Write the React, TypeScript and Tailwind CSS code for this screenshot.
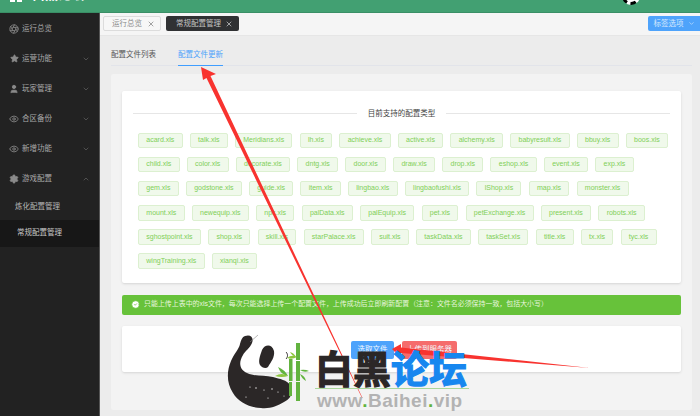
import { ChevronDown, ChevronUp, Aperture, Star, User, Eye, Settings, X, CircleCheck } from "lucide-react";

const menu = [
  { label: "运行总览", icon: <Aperture size={10} />, arrow: false },
  { label: "运营功能", icon: <Star size={9} fill="currentColor" />, arrow: true },
  { label: "玩家管理", icon: <User size={10} fill="currentColor" />, arrow: true },
  { label: "合区备份", icon: <Eye size={10} />, arrow: true },
  { label: "新增功能", icon: <Eye size={10} />, arrow: true },
];

const rows = [
  ["acard", "talk", "Meridians", "lh", "achieve", "active", "alchemy", "babyresult", "bbuy", "boos"],
  ["child", "color", "decorate", "dntg", "door", "draw", "drop", "eshop", "event", "exp"],
  ["gem", "godstone", "guide", "item", "lingbao", "lingbaofushi", "lShop", "map", "monster"],
  ["mount", "newequip", "npc", "palData", "palEquip", "pet", "petExchange", "present", "robots"],
  ["sghostpoint", "shop", "skill", "starPalace", "suit", "taskData", "taskSet", "title", "tx", "tyc"],
  ["wingTraining", "xianqi"],
];

function Sidebar() {
  return (
    <aside className="w-[100px] shrink-0 bg-[#222222] border-r border-[#555] text-[#a9a9a9] text-[7.5px] pt-[1px]">
      {menu.map((m) => (
        <div key={m.label} className="h-[30px] flex items-center pl-[6px] pr-[9px]">
          <span className="w-[16px] flex justify-center text-[#8a8a8a]">{m.icon}</span>
          <span className="flex-1">{m.label}</span>
          {m.arrow && <ChevronDown size={8} className="text-[#666]" />}
        </div>
      ))}
      <div className="h-[30px] flex items-center pl-[6px] pr-[9px]">
        <span className="w-[16px] flex justify-center text-[#8a8a8a]">
          <Settings size={10} fill="currentColor" />
        </span>
        <span className="flex-1">游戏配置</span>
        <ChevronUp size={8} className="text-[#666]" />
      </div>
      <div className="h-[26px] flex items-center pl-[15px] text-[#b5b5b5]">炼化配置管理</div>
      <div className="h-[27px] flex items-center pl-[17px] bg-[#171717] text-[#c8c8c8]">常规配置管理</div>
    </aside>
  );
}

function TabStrip() {
  return (
    <div className="h-[23px] shrink-0 bg-[#f5f5f5] border-b border-[#e6e6e6] flex items-center pl-[3px] text-[7.5px]">
      <div className="h-[15px] w-[58px] bg-[#f7f7f7] border border-[#dcdcdc] rounded-[2px] flex items-center pl-[8px] text-[#8c8c8c]">
        <span className="flex-1">运行总览</span>
        <X size={8} className="mr-[5px] text-[#777]" />
      </div>
      <div className="h-[15px] w-[73px] ml-[5px] bg-[#303133] rounded-[2px] flex items-center pl-[10px] text-[#c4c4c4]">
        <span className="flex-1">常规配置管理</span>
        <X size={8} className="mr-[6px] text-[#ddd]" />
      </div>
      <div className="ml-auto h-[15px] w-[52px] bg-[#4ea3fb] rounded-l-[2px] flex items-center justify-center gap-[4px] text-[#d5e8fd]">
        标签选项
        <ChevronDown size={7} />
      </div>
    </div>
  );
}

function Tags() {
  return (
    <div className="flex flex-col gap-[8.6px] mt-[14px] ml-[5px]">
      {rows.map((row, i) => (
        <div key={i} className="flex gap-[7.2px]">
          {row.map((t) => (
            <span
              key={t}
              className="h-[15.5px] px-[7.3px] flex items-center bg-[#f0f9eb] border border-[#dcf0d0] rounded-[2px] text-[#7fcf57] text-[7px] whitespace-nowrap"
            >
              {t}.xls
            </span>
          ))}
        </div>
      ))}
    </div>
  );
}

function Overlay() {
  return (
    <>
      <svg className="absolute left-0 top-0 w-[700px] h-[416px] pointer-events-none" viewBox="0 0 700 416">
        {/* long arrow up to the tab */}
        <path d="M201 67 L216 74 L210.5 76 L362.5 398 L362 398 L206.5 78 L203 80 Z" fill="#f8332f" />
        {/* arrow to the select button */}
        <path d="M392 349 L401 344 L401 347.5 L590 368 L401 353 L400 357 Z" fill="#f8332f" />
        {/* panda ink */}
        <path
          d="M245 336 C251 334 254 338 252 343 C250 348 245 351 243 355 C238 363 240 370 247 373 C256 377 264 375 273 377 C280 379 287 380 290 385 C294 392 291 399 284 402 C277 406 270 409 261 408 C250 408 238 402 233 393 C226 383 227 370 231 361 C234 354 239 349 240 344 C241 340 242 337 245 336 Z"
          fill="#2b2727"
        />
        <path d="M262 350 C265 344 272 344 274 351 C275 357 271 362 268 367 C266 369 262 368 260 365 C258 361 260 356 262 350 Z" fill="#2b2727" />
        <path d="M250 342 L258 335" stroke="#888" strokeWidth="0.6" />
        <path d="M286 352 C288 354 288 357 286 359" stroke="#2b2727" strokeWidth="1" fill="none" />
        <g fill="#ffffff">
          <circle cx="250" cy="387" r="0.6" />
          <circle cx="256" cy="388" r="0.7" />
          <circle cx="264" cy="390" r="0.6" />
          <circle cx="272" cy="389" r="0.7" />
          <circle cx="278" cy="392" r="0.6" />
          <circle cx="246" cy="397" r="0.6" />
          <circle cx="268" cy="398" r="0.6" />
          <circle cx="284" cy="396" r="0.5" />
        </g>
        {/* bamboo */}
        <rect x="296" y="343" width="4" height="17" fill="#62b33f" />
        <rect x="296" y="361" width="4" height="20" fill="#62b33f" />
        <rect x="296" y="382" width="4" height="19" fill="#62b33f" />
        <rect x="289" y="359" width="3.5" height="22" fill="#62b33f" />
        <rect x="289" y="382" width="3" height="14" fill="#62b33f" />
        <path d="M300 370 Q305 369 309 371 Q304 373 300 370 Z" fill="#62b33f" />
        <path d="M300 374 Q305 376 306 381 Q302 379 300 374 Z" fill="#62b33f" />
        <path d="M278 367 Q285 370 288 376 Q281 375 278 367 Z" fill="#62b33f" />
        <path d="M275 376 Q282 372 288 376 Q282 378 275 376 Z" fill="#8ec63f" />
        <path d="M287 358 Q292 354 297 357 Q292 360 287 358 Z" fill="#8ec63f" />
        <path d="M290 352 Q294 353 296 357 Q292 356 290 352 Z" fill="#8ec63f" />
      </svg>
      <div className="absolute left-[315px] top-[345px] h-[44px] w-[154px] border-b border-[#a9d69a] flex text-[38px] leading-[44px] font-bold whitespace-nowrap [-webkit-text-stroke:1.2px_currentColor] font-['Noto_Sans_CJK_SC',sans-serif]">
        <span className="text-[#2b2727]">白黑</span>
        <span className="text-[#1787ef]">论坛</span>
      </div>
      <div className="absolute left-[317px] top-[390px] text-[19px] leading-[22px] font-bold tracking-[0.5px] text-[#b3b3b3] whitespace-nowrap">
        www<span className="text-[#62b33f]">.</span>Baihei<span className="text-[#62b33f]">.</span>vip
      </div>
    </>
  );
}

export default function App() {
  return (
    <div className="relative w-[700px] h-[416px] overflow-hidden flex flex-col bg-[#ececec] font-['Liberation_Sans','Noto_Sans_CJK_SC',sans-serif]">
      <header className="h-[12.5px] shrink-0 bg-[#42a072] relative overflow-hidden border-b border-[#3a8f66]">
        <div className="absolute left-[10px] -top-[2px] flex gap-[2px]">
          <div className="w-[5px] h-[4px] bg-white" />
          <div className="w-[5px] h-[4px] bg-white" />
        </div>
        <div className="absolute left-[32px] -top-[13px] text-[13px] leading-[16px] text-white font-bold">白黑论坛</div>
        <div className="absolute left-[622px] -top-[13px] w-[18px] h-[18px] rounded-full border-[3px] border-dashed border-black bg-white" />
      </header>
      <div className="flex flex-1 min-h-0">
        <Sidebar />
        <main className="flex-1 flex flex-col min-w-0">
          <TabStrip />
          <div className="flex-1 pl-[11px] pr-[8px]">
            <div className="h-[30px] border-b border-[#e2e4ea] flex items-end text-[7.5px] gap-[22px]">
              <span className="h-[20px] flex items-center text-[#555]">配置文件列表</span>
              <span className="h-[20px] flex items-center text-[#4ea3fb] border-b border-[#409eff] -mb-px">配置文件更新</span>
            </div>
            <div className="mt-[8px] h-[336px] bg-[#f3f3f3] rounded-[2px] pt-[17px] px-[11px]">
              <section className="h-[192px] bg-white rounded-[2px] shadow-sm px-[11px] pt-[17px]">
                <div className="flex items-center gap-[11px] text-[7.5px] text-[#444]">
                  <div className="flex-1 h-px bg-[#e6e6e6]" />
                  <span>目前支持的配置类型</span>
                  <div className="flex-1 h-px bg-[#e6e6e6]" />
                </div>
                <Tags />
              </section>
              <div className="mt-[12px] h-[20px] bg-[#67c23a] rounded-[2px] flex items-center pl-[9px] gap-[4px] text-[6.95px] text-[#e6f5dc]">
                <CircleCheck size={9} className="text-[#67c23a] fill-white" />
                只能上传上表中的xls文件，每次只能选择上传一个配置文件，上传成功后立即刷新配置（注意：文件名必须保持一致，包括大小写）
              </div>
              <section className="mt-[11px] h-[46px] bg-white rounded-[2px] shadow-sm flex justify-center items-start pt-[15px] gap-[8px] text-[7.5px] text-[#f3f8ff] pl-[5px]">
                <div className="w-[43px] h-[18px] bg-[#4ea3fb] rounded-[2px] flex items-center justify-center">选取文件</div>
                <div className="w-[55px] h-[18px] bg-[#f56c6c] rounded-[2px] flex items-center justify-center">上传到服务器</div>
              </section>
            </div>
          </div>
        </main>
      </div>
      <Overlay />
    </div>
  );
}
